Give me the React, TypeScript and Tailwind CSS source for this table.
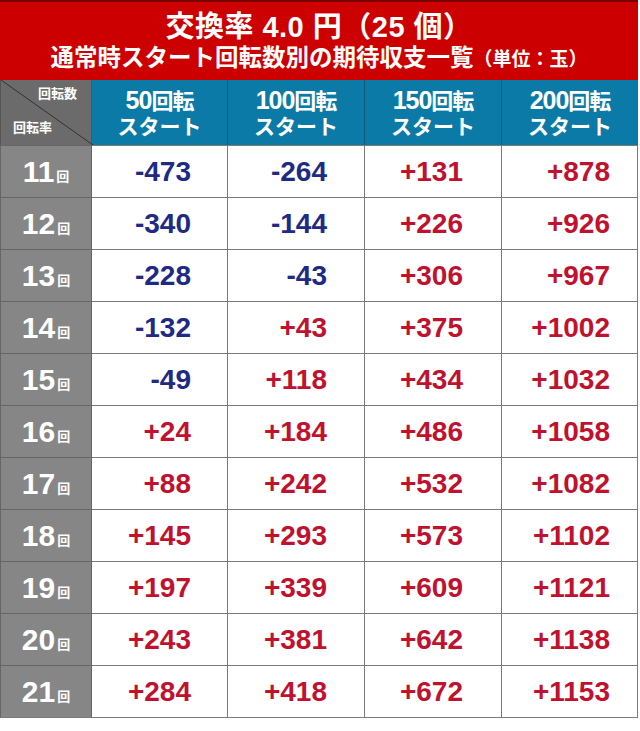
const rows: [number, number[]][] = [
  [11, [-473, -264, 131, 878]],
  [12, [-340, -144, 226, 926]],
  [13, [-228, -43, 306, 967]],
  [14, [-132, 43, 375, 1002]],
  [15, [-49, 118, 434, 1032]],
  [16, [24, 184, 486, 1058]],
  [17, [88, 242, 532, 1082]],
  [18, [145, 293, 573, 1102]],
  [19, [197, 339, 609, 1121]],
  [20, [243, 381, 642, 1138]],
  [21, [284, 418, 672, 1153]],
];

const cols = ["50", "100", "150", "200"];
const pads = ["pr-[36px]", "pr-[37px]", "pr-[38px]", "pr-[28px]"];

const font = { fontFamily: '"Liberation Sans", "Noto Sans CJK JP", sans-serif' };

const fmt = (n: number) => (n > 0 ? `+${n}` : `${n}`);

export default function App() {
  return (
    <div className="w-[640px] h-[731px] bg-white font-bold" style={font}>
      {/* title */}
      <div className="w-[638px] h-[80px] bg-[#cc0000] border-t-2 border-[#7a0000] flex flex-col items-center text-white">
        <div className="text-[29px] leading-[32px] mt-[9px] tracking-[0.5px]">
          交換率 4.0 円（25 個）
        </div>
        <div className="text-[23.5px] leading-[26px] mt-[2px]">
          通常時スタート回転数別の期待収支一覧<span className="text-[19px]">（単位：玉）</span>
        </div>
      </div>

      <div className="w-[638px] grid grid-cols-[92px_136px_137px_137px_136px] border-b border-r border-[#7a7a7a]">
        {/* header row */}
        <div className="relative h-[65px] bg-[#6b6b6b] border-l border-r border-[#555] text-white text-[13px]">
          <svg className="absolute inset-0" width="92" height="65">
            <line x1="0" y1="0" x2="92" y2="65" stroke="#333" strokeWidth="1" />
          </svg>
          <span className="absolute right-[14px] top-[4px]">回転数</span>
          <span className="absolute left-[12px] bottom-[8px]">回転率</span>
        </div>
        {cols.map((c, i) => (
          <div
            key={c}
            className={`h-[65px] bg-[#0b7aa6] text-white flex flex-col items-center justify-center ${
              i < 3 ? "border-r border-[#0a5a7c]" : ""
            }`}
          >
            <div className="text-[25px] leading-[27px] tracking-[-1px]">
              {c}
              <span className="text-[22px]">回転</span>
            </div>
            <div className="text-[21px] leading-[24px]">スタート</div>
          </div>
        ))}

        {/* data rows */}
        {rows.map(([r, vals]) => (
          <Row key={r} r={r} vals={vals} />
        ))}
      </div>
    </div>
  );
}

function Row({ r, vals }: { r: number; vals: number[] }) {
  return (
    <>
      <div className="h-[52px] bg-[#868686] border-l border-t border-r border-[#666] text-white flex items-center justify-center">
        <span className="text-[30px] leading-none">{r}</span>
        <span className="text-[13px] ml-[2px] mt-[10px]">回</span>
      </div>
      {vals.map((v, i) => (
        <div
          key={i}
          className={`h-[52px] border-t border-[#7a7a7a] flex items-center justify-end text-[28px] ${pads[i]} ${
            i < 3 ? "border-r" : ""
          } ${v < 0 ? "text-[#1e2a84]" : "text-[#c0112e]"}`}
        >
          {fmt(v)}
        </div>
      ))}
    </>
  );
}
